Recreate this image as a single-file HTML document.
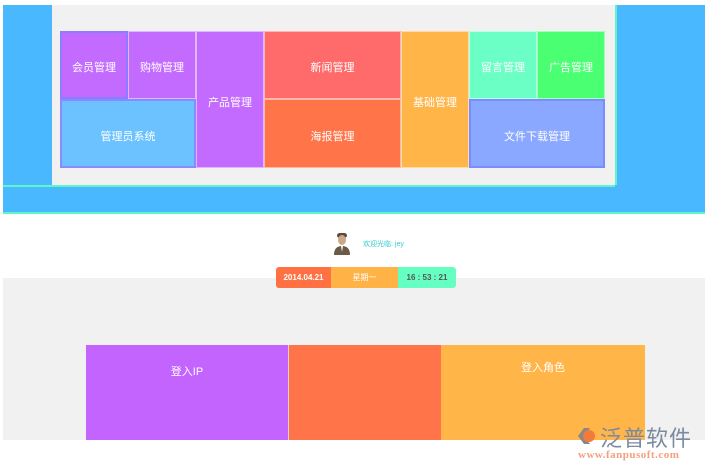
<!DOCTYPE html><html><head><meta charset="utf-8"><style>
body{margin:0;width:705px;height:470px;background:#fff;position:relative;overflow:hidden;font-family:"Liberation Sans","Noto Sans CJK SC",sans-serif}
div{position:absolute;box-sizing:border-box}
.t{color:#fff;font-size:11px;display:flex;align-items:center;justify-content:center;border:1px solid rgba(255,255,255,.5);padding-top:4px}
</style></head><body>
<div style="left:3px;top:5px;width:702px;height:209px;background:#4ab8ff;border-bottom:2px solid #5ef5c8"></div>
<div style="left:3px;top:185px;width:612px;height:2px;background:#5ef5c8"></div>
<div style="left:52px;top:5px;width:563px;height:180px;background:#f1f1f1"></div>
<div style="left:615px;top:5px;width:2px;height:180px;background:#5ef5c8"></div>
<div class="t" style="left:60px;top:31px;width:68px;height:68px;background:#c36bff;border:2px solid #8a7dff">会员管理</div>
<div class="t" style="left:128px;top:31px;width:68px;height:68px;background:#c36bff">购物管理</div>
<div class="t" style="left:60px;top:99px;width:136px;height:69px;background:#6cc2ff;border:2px solid #8a8aff">管理员系统</div>
<div class="t" style="left:196px;top:31px;width:68px;height:137px;background:#c36bff">产品管理</div>
<div class="t" style="left:264px;top:31px;width:137px;height:68px;background:#ff6b6b">新闻管理</div>
<div class="t" style="left:264px;top:99px;width:137px;height:69px;background:#ff7448">海报管理</div>
<div class="t" style="left:401px;top:31px;width:68px;height:137px;background:#ffb548">基础管理</div>
<div class="t" style="left:469px;top:31px;width:68px;height:68px;background:#6bffc5">留言管理</div>
<div class="t" style="left:537px;top:31px;width:68px;height:68px;background:#4aff72">广告管理</div>
<div class="t" style="left:469px;top:99px;width:136px;height:69px;background:#8aa8ff;border:2px solid #7a8cff">文件下载管理</div>
<div style="left:333px;top:232px;width:18px;height:24px">
<svg width="18" height="24"><rect x="4" y="1" width="10" height="5" rx="3" fill="#5a4a3a"/><ellipse cx="9" cy="8" rx="4" ry="5" fill="#c9a888"/><path d="M1 23 Q1 14 9 14 Q17 14 17 23Z" fill="#6b5a48"/><path d="M8 14 L9 20 L10 14Z" fill="#fff"/></svg></div>
<div style="left:363px;top:239px;font-size:7px;color:#3cc;">欢迎光临: jey</div>
<div style="left:3px;top:278px;width:702px;height:162px;background:#f1f1f1"></div>
<div style="left:276px;top:267px;width:55px;height:21px;background:#ff7043;color:#fff;font-size:8px;font-weight:bold;display:flex;align-items:center;justify-content:center;border-radius:3px 0 0 3px">2014.04.21</div>
<div style="left:331px;top:267px;width:67px;height:21px;background:#ffb347;color:#fff;font-size:8px;display:flex;align-items:center;justify-content:center">星期一</div>
<div style="left:398px;top:267px;width:58px;height:21px;background:#66ffc2;color:#555;font-size:8px;font-weight:bold;display:flex;align-items:center;justify-content:center;border-radius:0 3px 3px 0">16 : 53 : 21</div>
<div class="t" style="left:86px;top:345px;width:202px;height:95px;background:#c364ff;border:none;align-items:flex-start;padding-top:18px">登入IP</div>
<div style="left:288px;top:345px;width:153px;height:95px;background:#ff7448;border-left:1px solid #fcc"></div>
<div class="t" style="left:441px;top:345px;width:204px;height:95px;background:#ffb548;border:none;align-items:flex-start;padding-top:14px">登入角色</div>
<div style="left:575px;top:425px;width:22px;height:22px"><svg width="22" height="22"><path d="M3 11 L9 3 L15 3 L9 11 L15 19 L9 19Z" fill="#888"/><circle cx="14" cy="11" r="6" fill="#f47a3a"/></svg></div>
<div style="left:600px;top:421px;font-size:22px;color:#7a8aa0;letter-spacing:1px">泛普软件</div>
<div style="left:578px;top:449px;font-size:11px;color:#f4a080;font-family:'Liberation Serif',serif;font-weight:bold;letter-spacing:.5px">www.fanpusoft.com</div>
</body></html>
